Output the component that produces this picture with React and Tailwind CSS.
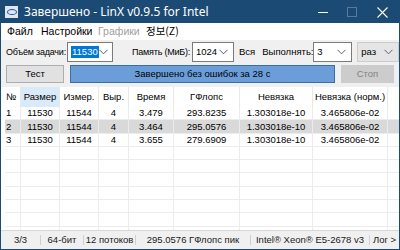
import React from "react";

const Chevron = ({ color = "#606060" }) => (
  <svg width="9" height="6" viewBox="0 0 9 6" className="shrink-0">
    <path d="M0.5 0.8 L4.5 4.8 L8.5 0.8" fill="none" stroke={color} strokeWidth="1" />
  </svg>
);

const Combo = ({ w, children, gray }) => (
  <div
    className={`flex h-[20px] shrink-0 items-center justify-between border pl-[3px] pr-[5px] ${
      gray ? "border-[#cccccc] bg-[#e5e5e5]" : "border-[#7a7a7a] bg-white"
    }`}
    style={{ width: w }}
  >
    {children}
    <Chevron />
  </div>
);

const cols = [
  { t: "№", w: 16, a: "left" },
  { t: "Размер", w: 39, a: "center" },
  { t: "Измер.", w: 39, a: "center" },
  { t: "Выр.", w: 30, a: "center" },
  { t: "Время", w: 45, a: "center" },
  { t: "ГФлопс", w: 66, a: "center" },
  { t: "Невязка", w: 73, a: "center" },
  { t: "Невязка (норм.)", w: 75, a: "center" },
  { t: "", w: 14, a: "center" },
];

const rows = [
  ["1", "11530", "11544", "4", "3.479", "293.8235", "1.303018e-10", "3.465806e-02", ""],
  ["2", "11530", "11544", "4", "3.464", "295.0576", "1.303018e-10", "3.465806e-02", ""],
  ["3", "11530", "11544", "4", "3.655", "279.6909", "1.303018e-10", "3.465806e-02", ""],
];

export default function App() {
  const empty = Array.from({ length: 7 }, () => Array(9).fill(""));
  return (
    <div
      className="flex h-[250px] w-[400px] flex-col overflow-hidden whitespace-nowrap border border-[#1b4a74] bg-[#f0f0f0] text-[9.5px] leading-none text-black"
      style={{ fontFamily: "'Liberation Sans', Arial, sans-serif" }}
    >
      {/* Title bar */}
      <div className="flex h-[22px] shrink-0 items-center bg-[#1b4a74] text-white">
        <div className="ml-[4px] flex h-[12px] w-[13px] items-center justify-center bg-[#dfe6ee]">
          <div className="h-[6px] w-[10px] rounded-[50%] border border-[#1a5aa8]" />
        </div>
        <div
          className="ml-[6px] text-[12px]"
          style={{ fontFamily: "'Noto Sans', 'Open Sans', sans-serif" }}
        >
          Завершено - LinX v0.9.5 for Intel
        </div>
        <div className="ml-auto flex h-full items-center">
          <div className="flex w-[29px] justify-center">
            <div className="h-px w-[10px] bg-white" />
          </div>
          <div className="flex w-[29px] justify-center">
            <div className="h-[10px] w-[10px] border border-[#5a7a98]" />
          </div>
          <div className="flex w-[33px] justify-center">
            <svg width="11" height="11" viewBox="0 0 11 11">
              <path d="M0.5 0.5 L10.5 10.5 M10.5 0.5 L0.5 10.5" stroke="white" strokeWidth="1.1" />
            </svg>
          </div>
        </div>
      </div>

      {/* Menu */}
      <div className="flex h-[17px] shrink-0 items-center bg-white pl-[6px] text-[10.5px]">
        <div className="w-[34px] shrink-0">Файл</div>
        <div className="w-[57px] shrink-0">Настройки</div>
        <div className="w-[48px] shrink-0 text-[#a0a0a0]">Графики</div>
        <div style={{ fontFamily: "'Noto Sans CJK KR', 'Liberation Sans', sans-serif" }}>정보(Z)</div>
      </div>

      {/* Row 1 */}
      <div className="mt-[2px] flex h-[20px] shrink-0 items-center pl-[5px]">
        <div className="w-[61px] shrink-0 text-[9px] tracking-[-0.2px]">Объём задачи:</div>
        <Combo w={46}>
          <span className="bg-[#0078d7] px-px py-px text-white">11530</span>
        </Combo>
        <div className="ml-[19px] w-[60px] shrink-0 text-[9px] tracking-[-0.2px]">Память (МиБ):</div>
        <Combo w={42}>
          <span>1024</span>
        </Combo>
        <div className="ml-[5px] shrink-0">Вся</div>
        <div className="ml-[7px] w-[51px] shrink-0">Выполнять:</div>
        <Combo w={39}>
          <span>3</span>
        </Combo>
        <div className="ml-[5px]">
          <Combo w={42} gray>
            <span>раз</span>
          </Combo>
        </div>
      </div>

      {/* Row 2 */}
      <div className="mt-[3px] flex h-[18px] shrink-0 items-center pl-[5px] pr-[5px]">
        <div className="flex h-full w-[58px] items-center justify-center border border-[#adadad] bg-[#e1e1e1]">
          Тест
        </div>
        <div className="ml-[6px] flex h-full w-[265px] items-center justify-center border border-[#3c6ea6] bg-[#6b9ed8]">
          Завершено без ошибок за 28 с
        </div>
        <div className="ml-[6px] flex h-full flex-1 items-center justify-center border border-[#cccccc] bg-[#cccccc] text-[#838383]">
          Стоп
        </div>
      </div>

      {/* Table */}
      <div className="mt-[4px] min-h-0 flex-1 overflow-hidden bg-white pl-[4px]">
        <div className="flex h-[20px] items-center">
          {cols.map((c, i) => (
            <div
              key={i}
              className={`flex h-full shrink-0 items-center border-r border-[#e8e8e8] ${
                i === 1 ? "bg-[#d9ebf9]" : ""
              } ${c.a === "left" ? "justify-start pl-px" : "justify-center"}`}
              style={{ width: c.w }}
            >
              {c.t}
            </div>
          ))}
        </div>
        {[...rows, ...empty].map((r, ri) => (
          <div
            key={ri}
            className={`flex h-[13.3px] items-center border-b border-[#ececec] ${
              ri === 1 ? "bg-[#d9d9d9]" : ""
            }`}
          >
            {r.map((v, i) => (
              <div
                key={i}
                className={`flex h-full shrink-0 items-center border-r border-[#ececec] ${
                  i === 0 ? "justify-start pl-px" : "justify-center"
                }`}
                style={{ width: cols[i].w }}
              >
                {v}
              </div>
            ))}
          </div>
        ))}
      </div>

      {/* Status bar */}
      <div className="flex h-[19px] shrink-0 items-center border-t border-[#d7d7d7] bg-[#f0f0f0] text-[#1a1a1a]">
        <div className="flex w-[40px] justify-center border-r border-[#d0d0d0]">3/3</div>
        <div className="flex w-[43px] justify-center border-r border-[#d0d0d0]">64-бит</div>
        <div className="flex w-[52px] justify-center border-r border-[#d0d0d0]">12 потоков</div>
        <div className="flex w-[115px] justify-center border-r border-[#d0d0d0]">295.0576 ГФлопс пик</div>
        <div className="flex w-[119px] justify-center border-r border-[#d0d0d0]">Intel® Xeon® E5-2678 v3</div>
        <div className="flex flex-1 justify-center">Лог &gt;</div>
      </div>
    </div>
  );
}
